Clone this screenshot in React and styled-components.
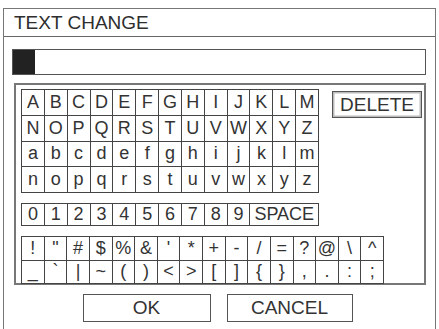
import React from "react";
import styled, { createGlobalStyle } from "styled-components";

const Global = createGlobalStyle`
  html, body {
    margin: 0;
    padding: 0;
    background: #fff;
    overflow: hidden;
  }
  body {
    font-family: "Liberation Sans", Arial, sans-serif;
    color: #333;
  }
`;

const Frame = styled.div`
  margin: 8px 0 0 3px;
  width: 433px;
  height: 321px;
  box-sizing: border-box;
  border: 1.5px solid #777;
  border-bottom: none;
  background: #fff;
`;

const TitleBar = styled.div`
  height: 28px;
  box-sizing: border-box;
  border-bottom: 1.5px solid #666;
  padding-left: 10px;
  font-size: 19px;
  line-height: 27px;
  color: #2e2e2e;
`;

const Body = styled.div`
  padding: 12px 9px 0 8px;
  display: flex;
  flex-direction: column;
`;

const Input = styled.div`
  height: 26px;
  box-sizing: border-box;
  border: 1.5px solid #555;
  display: flex;
  align-items: stretch;
`;

const Cursor = styled.div`
  width: 22px;
  background: #222;
`;

const Panel = styled.div`
  margin: 8px 0 0 2px;
  height: 202px;
  box-sizing: border-box;
  border: 2px solid #777;
  padding: 4px 2px 0 5px;
  display: flex;
  flex-direction: column;
`;

const TopArea = styled.div`
  display: flex;
  align-items: flex-start;
`;

const Grid = styled.div`
  display: grid;
  grid-template-columns: repeat(${(p) => p.$cols}, 1fr);
  grid-auto-rows: ${(p) => p.$row}px;
  width: ${(p) => p.$width}px;
  border-top: 1px solid #444;
  border-left: 1px solid #444;
  margin-top: ${(p) => p.$top || 0}px;
`;

const Key = styled.div`
  border-right: 1px solid #444;
  border-bottom: 1px solid #444;
  display: flex;
  align-items: center;
  justify-content: center;
  font-size: 18px;
  color: #333;
  grid-column: span ${(p) => p.$span || 1};
`;

const Delete = styled.div`
  margin-left: auto;
  margin-top: 2px;
  width: 90px;
  height: 27px;
  box-sizing: border-box;
  border: 1.5px solid #555;
  box-shadow: inset 0 0 0 1.5px #bbb;
  display: flex;
  align-items: center;
  justify-content: center;
  font-size: 19px;
  color: #333;
`;

const Buttons = styled.div`
  display: flex;
  justify-content: center;
  gap: 16px;
  margin-top: 9px;
  padding-right: 3px;
`;

const Button = styled.div`
  width: ${(p) => p.$w}px;
  height: 28px;
  box-sizing: border-box;
  border: 1.5px solid #555;
  display: flex;
  align-items: center;
  justify-content: center;
  font-size: 19px;
  color: #333;
`;

const letters = [
  "ABCDEFGHIJKLM",
  "NOPQRSTUVWXYZ",
  "abcdefghijklm",
  "nopqrstuvwxyz",
];
const digits = "0123456789".split("");
const symbols = [
  ["!", '"', "#", "$", "%", "&", "'", "*", "+", "-", "/", "=", "?", "@", "\\", "^"],
  ["_", "`", "|", "~", "(", ")", "<", ">", "[", "]", "{", "}", ",", ".", ":", ";"],
];

export default function App() {
  return (
    <>
      <Global />
      <Frame>
        <TitleBar>TEXT CHANGE</TitleBar>
        <Body>
          <Input>
            <Cursor />
          </Input>
          <Panel>
            <TopArea>
              <Grid $cols={13} $row={25.75} $width={297}>
                {letters.join("").split("").map((c, i) => (
                  <Key key={i}>{c}</Key>
                ))}
              </Grid>
              <Delete>DELETE</Delete>
            </TopArea>
            <Grid $cols={13} $row={22} $width={297} $top={10}>
              {digits.map((d) => (
                <Key key={d}>{d}</Key>
              ))}
              <Key $span={3}>SPACE</Key>
            </Grid>
            <Grid $cols={16} $row={23.5} $width={362} $top={10}>
              {symbols.flat().map((s, i) => (
                <Key key={i}>{s}</Key>
              ))}
            </Grid>
          </Panel>
          <Buttons>
            <Button $w={128}>OK</Button>
            <Button $w={126}>CANCEL</Button>
          </Buttons>
        </Body>
      </Frame>
    </>
  );
}
